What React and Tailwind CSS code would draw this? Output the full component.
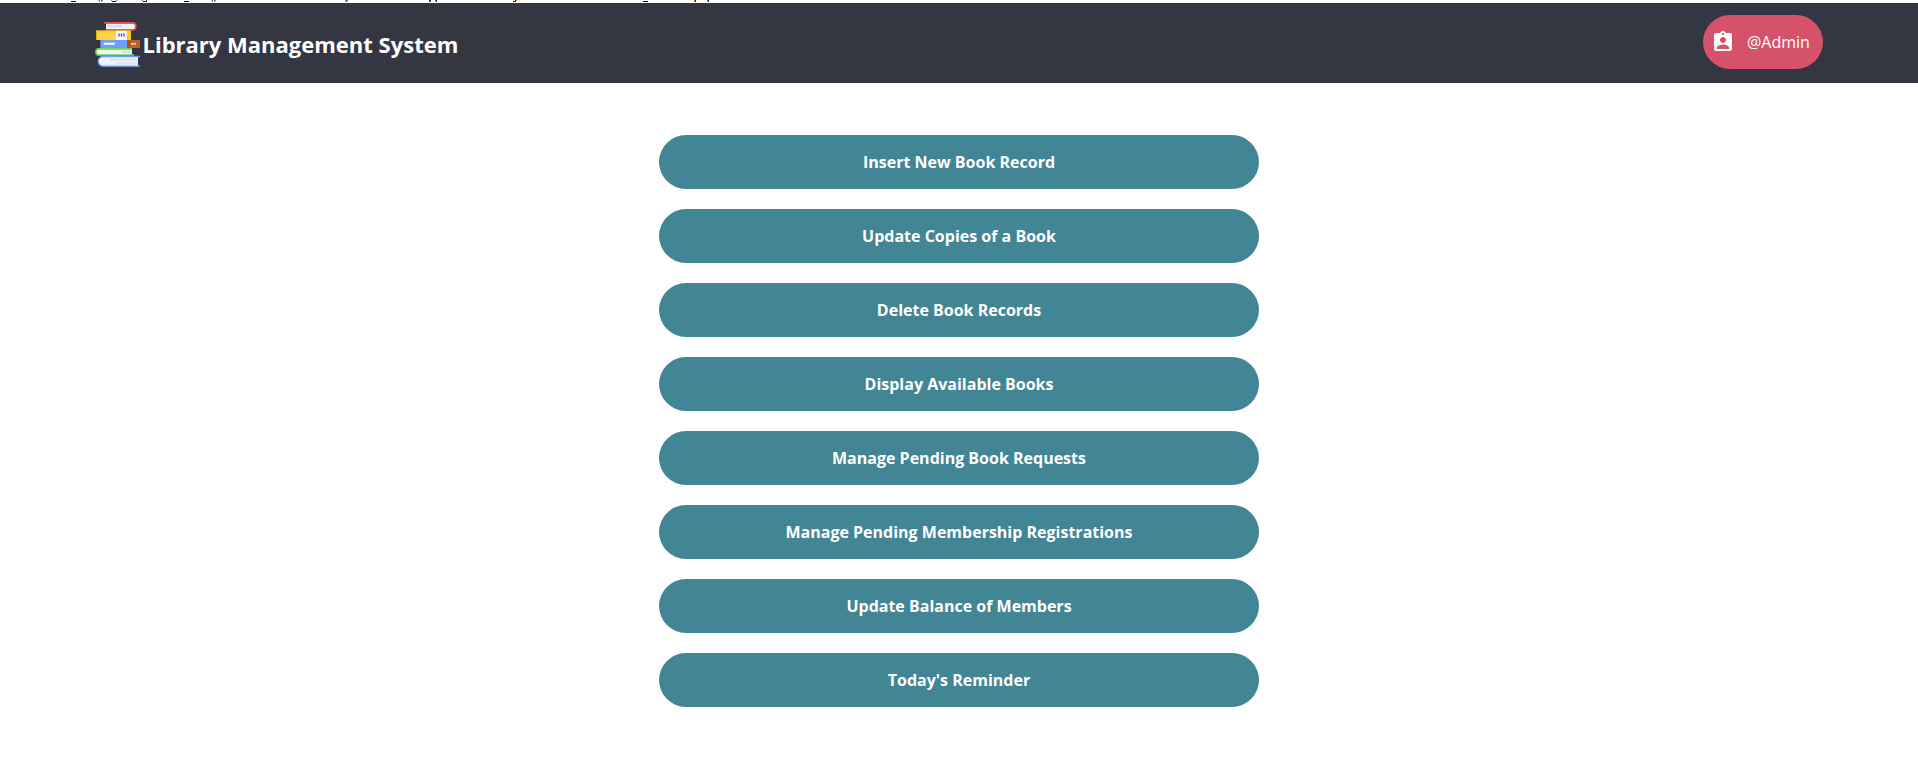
import { MdAssignmentInd } from "react-icons/md";

const actions = [
  "Insert New Book Record",
  "Update Copies of a Book",
  "Delete Book Records",
  "Display Available Books",
  "Manage Pending Book Requests",
  "Manage Pending Membership Registrations",
  "Update Balance of Members",
  "Today's Reminder",
];

// x, y, width, height, colour
const marks = [
  [71, 1, 5, 1, "#111"],
  [98, 0, 1, 1, "#e09a50"], [99, 0, 1, 2, "#6a8fc0"], [101, 0, 1, 2, "#8a6a48"], [102, 0, 1, 1, "#5a9ad8"],
  [111, 0, 1, 1, "#b87840"], [116, 0, 1, 1, "#3f78b8"], [112, 1, 4, 1, "#111"],
  [142, 0, 1, 1, "#704060"], [146, 0, 1, 1, "#704060"], [143, 1, 4, 1, "#222"],
  [184, 1, 5, 1, "#111"],
  [211, 0, 1, 1, "#e09a50"], [212, 0, 1, 2, "#6a8fc0"], [214, 0, 1, 2, "#8a6a48"], [215, 0, 1, 1, "#5a9ad8"],
  [346, 0, 1, 1, "#321"], [347, 0, 1, 1, "#3f78b8"], [345, 1, 2, 1, "#b87020"],
  [429, 0, 1, 2, "#14284a"], [430, 0, 1, 2, "#2a72b8"],
  [435, 0, 1, 2, "#c87830"], [436, 0, 1, 2, "#142a60"],
  [515, 0, 1, 1, "#321"], [516, 0, 1, 1, "#d89040"], [513, 1, 3, 1, "#222"],
  [643, 1, 5, 1, "#111"],
  [694, 0, 1, 2, "#c87830"], [695, 0, 1, 2, "#142a60"],
  [707, 0, 1, 2, "#c87830"], [708, 0, 1, 2, "#142a60"],
];

function BooksLogo() {
  return (
    <svg className="h-[45px] w-[45px] shrink-0" viewBox="0 0 45 45">
      <path d="M11 1.5H37.5a3 3 0 0 1 0 6H11z" fill="#eef3fa" />
      <path d="M9 .8H38a3.7 3.7 0 0 1 0 7.2H11" fill="none" stroke="#f04a60" strokeWidth="1.5" />
      <path d="M12 4.3H27" stroke="#c9d6e8" strokeWidth="1.2" />
      <path d="M1 8.5H36V18H1z" fill="#ffd53f" />
      <path d="M1 8.5H36v.8H2V18H1z" fill="#e0a91b" />
      <path d="M32 9h4v9h-4z" fill="#fc0" />
      <path d="M21 8.8H32V18H21z" fill="#f5f7fb" />
      <path d="M24 11.5v3M26.5 11.5v3M29 11.5v3" stroke="#5d6270" strokeWidth="1.4" />
      <path d="M5 18H33v8H5z" fill="#6f9eff" />
      <path d="M5 18H6v8H5z" fill="#4c7be0" />
      <path d="M9.5 21.8H19" stroke="#fff" strokeWidth="2" strokeLinecap="round" />
      <path d="M32 18H45v8H32z" fill="#b9632c" />
      <path d="M32 18h3v8h-3z" fill="#a0562a" />
      <path d="M36 21.8h5" stroke="#f3dcca" strokeWidth="1.5" />
      <path d="M37 27.2H4a2.9 2.9 0 0 0 0 5.8H37z" fill="#eef3fa" />
      <path d="M37 26.8H4a3.1 3.1 0 0 0 0 6.3H39" fill="none" stroke="#74d645" strokeWidth="1.5" />
      <path d="M27 30H37" stroke="#c6d8e8" strokeWidth="1.4" />
      <path d="M43 34.6H8a4.8 4.8 0 0 0 0 9.6H43z" fill="#edf3fb" />
      <path d="M45 34.5H8a4.8 4.8 0 0 0 0 9.7H45" fill="none" stroke="#6f9eff" strokeWidth="1.3" />
      <path d="M15 37.6H42M22.5 41H42" stroke="#c6d8e8" strokeWidth="1.2" />
    </svg>
  );
}

export default function App() {
  return (
    <div className="min-h-[775px] bg-white font-['Open_Sans',sans-serif] text-white">
      <svg className="block h-[3px] w-full" shapeRendering="crispEdges">
        {marks.map(([x, y, w, h, fill]) => (
          <rect key={`${x}-${y}`} x={x} y={y} width={w} height={h} fill={fill} />
        ))}
      </svg>
      <header className="flex h-20 justify-between bg-[#343642] px-[95px]">
        <div className="flex items-center pt-[3px]">
          <BooksLogo />
          <h1 className="mb-[2px] ml-[2.5px] text-[22px] leading-[30px] font-bold whitespace-nowrap">
            Library Management System
          </h1>
        </div>
        <button className="mt-3 flex h-[54px] w-[120px] items-center rounded-full bg-[#d6516a] pl-2">
          <MdAssignmentInd className="size-6" />
          <span className="ml-3 text-base">@Admin</span>
        </button>
      </header>
      <main className="mx-auto mt-[52px] flex w-[600px] flex-col gap-5">
        {actions.map((label) => (
          <button key={label} className="h-[54px] rounded-full bg-[#428595] text-base font-bold">
            {label}
          </button>
        ))}
      </main>
    </div>
  );
}
